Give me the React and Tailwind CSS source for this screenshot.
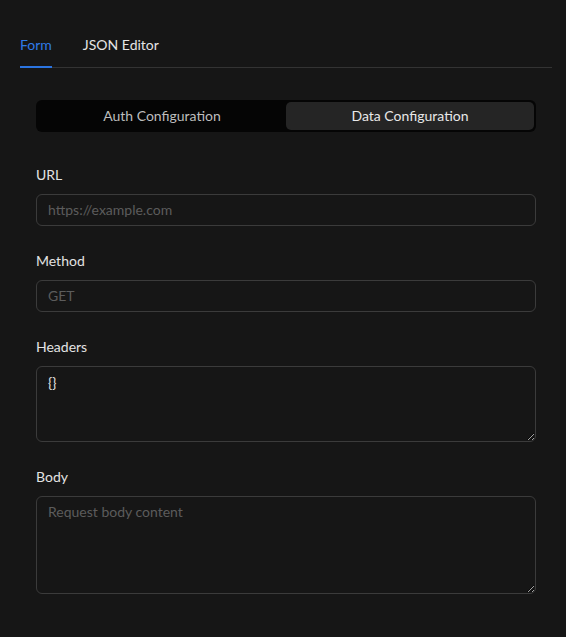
import React, { useState } from "react";

const font = { fontFamily: '"Lato", "Noto Sans", sans-serif' };

function Field({ label, children }) {
  return (
    <div className="flex flex-col">
      <label className="text-sm leading-5 text-[#e3e3e3] mb-[9px]">{label}</label>
      {children}
    </div>
  );
}

export default function App() {
  const [tab, setTab] = useState("form");
  const [section, setSection] = useState("data");

  return (
    <div className="min-h-screen bg-[#161616] pt-[35px] pl-5 pr-[14px]" style={font}>
      {/* tabs */}
      <div className="flex gap-[31px] border-b border-[#333333]">
        <button
          onClick={() => setTab("form")}
          className={
            tab === "form"
              ? "text-sm leading-5 pb-[11px] border-b-2 border-[#2b74e0] text-[#2f7ae8] -mb-px"
              : "text-sm leading-5 pb-[11px] border-b-2 border-transparent text-[#e5e5e5] -mb-px"
          }
        >
          Form
        </button>
        <button
          onClick={() => setTab("json")}
          className={
            tab === "json"
              ? "text-sm leading-5 pb-[11px] border-b-2 border-[#2b74e0] text-[#2f7ae8] -mb-px"
              : "text-sm leading-5 pb-[11px] border-b-2 border-transparent text-[#e5e5e5] -mb-px"
          }
        >
          JSON Editor
        </button>
      </div>

      <div className="px-4 pt-8">
        {/* segmented control */}
        <div className="grid grid-cols-2 p-0.5 rounded-md bg-[#050505]">
          <button
            onClick={() => setSection("auth")}
            className={
              section === "auth"
                ? "h-7 rounded-[5px] bg-[#252525] text-sm text-[#e8e8e8]"
                : "h-7 rounded-[5px] text-sm text-[#bdbdbd]"
            }
          >
            Auth Configuration
          </button>
          <button
            onClick={() => setSection("data")}
            className={
              section === "data"
                ? "h-7 rounded-[5px] bg-[#252525] text-sm text-[#e8e8e8]"
                : "h-7 rounded-[5px] text-sm text-[#bdbdbd]"
            }
          >
            Data Configuration
          </button>
        </div>

        <div className="flex flex-col gap-[25px] mt-[33px]">
          <Field label="URL">
            <input
              className="h-8 px-[11px] pb-px rounded-md border border-[#3b3b3b] bg-transparent text-sm text-[#e3e3e3] placeholder:text-[#5c5c5c] outline-none"
              placeholder="https://example.com"
              style={font}
            />
          </Field>
          <Field label="Method">
            <input
              className="h-8 px-[11px] pb-px rounded-md border border-[#3b3b3b] bg-transparent text-sm text-[#e3e3e3] placeholder:text-[#5c5c5c] outline-none"
              placeholder="GET"
              style={font}
            />
          </Field>
          <Field label="Headers">
            <textarea
              className="h-[76px] px-[11px] pt-1.5 pb-2 rounded-md border border-[#3b3b3b] bg-transparent text-sm leading-5 text-[#e3e3e3] placeholder:text-[#5c5c5c] outline-none"
              defaultValue="{}"
              style={font}
            />
          </Field>
          <Field label="Body">
            <textarea
              className="h-[98px] px-[11px] pt-[5px] pb-2 rounded-md border border-[#3b3b3b] bg-transparent text-sm leading-5 text-[#e3e3e3] placeholder:text-[#5c5c5c] outline-none"
              placeholder="Request body content"
              style={font}
            />
          </Field>
        </div>
      </div>
    </div>
  );
}
